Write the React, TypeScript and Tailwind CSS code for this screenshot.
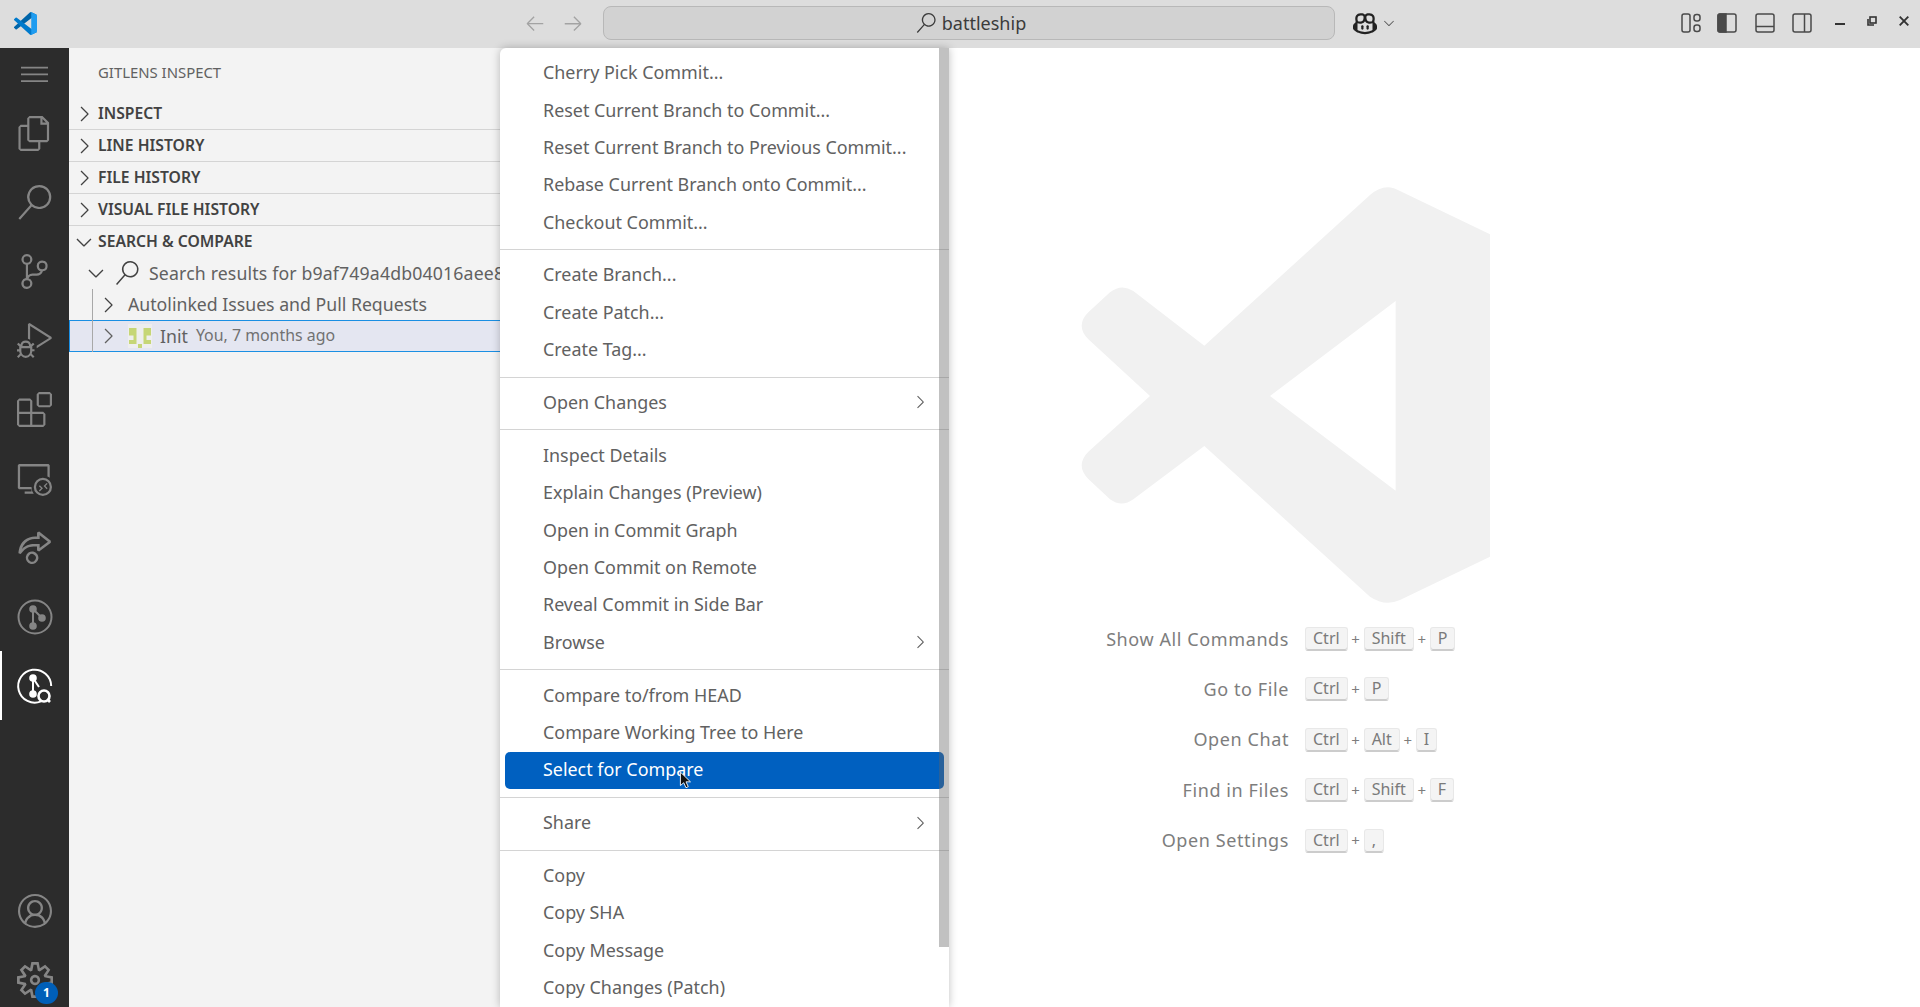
import {
  VscAccount,
  VscArrowLeft,
  VscArrowRight,
  VscChevronDown,
  VscChevronRight,
  VscCopilot,
  VscDebugAlt,
  VscExtensions,
  VscFiles,
  VscLiveShare,
  VscMenu,
  VscRemoteExplorer,
  VscSearch,
  VscSettingsGear,
  VscSourceControl,
} from 'react-icons/vsc';

const PullRequestsIcon = () => (
  <svg viewBox="0 0 40 40" className="w-10 h-10" fill="none" stroke="currentColor" strokeWidth="2">
    <circle cx="20" cy="20" r="16.5" />
    <path d="M18 12v17M18 12l9 9" />
    <circle cx="18" cy="12" r="2.8" fill="currentColor" />
    <circle cx="18" cy="29" r="2.8" fill="currentColor" />
    <circle cx="27" cy="21" r="2.8" fill="currentColor" />
  </svg>
);

const activityTop = [
  VscFiles,
  VscSearch,
  VscSourceControl,
  VscDebugAlt,
  VscExtensions,
  VscRemoteExplorer,
  VscLiveShare,
];

const sections = ['INSPECT', 'LINE HISTORY', 'FILE HISTORY', 'VISUAL FILE HISTORY'];

// null = separator
const menu: (null | { label: string; sub?: boolean; active?: boolean })[] = [
  { label: 'Cherry Pick Commit...' },
  { label: 'Reset Current Branch to Commit...' },
  { label: 'Reset Current Branch to Previous Commit...' },
  { label: 'Rebase Current Branch onto Commit...' },
  { label: 'Checkout Commit...' },
  null,
  { label: 'Create Branch...' },
  { label: 'Create Patch...' },
  { label: 'Create Tag...' },
  null,
  { label: 'Open Changes', sub: true },
  null,
  { label: 'Inspect Details' },
  { label: 'Explain Changes (Preview)' },
  { label: 'Open in Commit Graph' },
  { label: 'Open Commit on Remote' },
  { label: 'Reveal Commit in Side Bar' },
  { label: 'Browse', sub: true },
  null,
  { label: 'Compare to/from HEAD' },
  { label: 'Compare Working Tree to Here' },
  { label: 'Select for Compare', active: true },
  null,
  { label: 'Share', sub: true },
  null,
  { label: 'Copy' },
  { label: 'Copy SHA' },
  { label: 'Copy Message' },
  { label: 'Copy Changes (Patch)' },
];

const shortcuts = [
  { label: 'Show All Commands', keys: ['Ctrl', 'Shift', 'P'] },
  { label: 'Go to File', keys: ['Ctrl', 'P'] },
  { label: 'Open Chat', keys: ['Ctrl', 'Alt', 'I'] },
  { label: 'Find in Files', keys: ['Ctrl', 'Shift', 'F'] },
  { label: 'Open Settings', keys: ['Ctrl', ','] },
];

const VsCodeLogo = () => (
  <svg viewBox="0 0 100 100" className="w-[23px] h-[23px]">
    <path fill="#0065A9" d="M96.46 10.8 75.86.87a6.23 6.23 0 0 0-7.1 1.2L1.32 63.6a4.17 4.17 0 0 0 0 6.16l5.51 5.01a4.17 4.17 0 0 0 5.32.24L93.4 13.4c2.72-2.07 6.63-.13 6.63 3.29v-.24a6.25 6.25 0 0 0-3.54-5.63z" />
    <path fill="#007ACC" d="M96.46 89.2 75.86 99.13a6.23 6.23 0 0 1-7.1-1.2L1.32 36.4a4.17 4.17 0 0 1 0-6.16l5.51-5.01a4.17 4.17 0 0 1 5.32-.24L93.4 86.6c2.72 2.07 6.63.13 6.63-3.29v.24a6.25 6.25 0 0 1-3.54 5.63z" />
    <path fill="#1F9CF0" d="M75.86 99.13a6.23 6.23 0 0 1-7.11-1.2C71.06 100.23 75 98.6 75 95.33V4.67c0-3.27-3.94-4.9-6.25-2.59a6.23 6.23 0 0 1 7.11-1.2l20.6 9.91A6.25 6.25 0 0 1 100 16.42v67.17a6.25 6.25 0 0 1-3.54 5.63z" />
  </svg>
);

const Watermark = () => (
  <svg viewBox="60 40 1235 1260" className="w-[411.67px] h-[420px] shrink-0 ml-[2px]">
    <path
      fill="#f1f1f1"
      fillRule="evenodd"
      d="M1020 58 L1290 188 V1155 L1020 1285 Q975 1305 930 1275 L433 823 L220 983 Q185 1008 150 983 L85 922 Q45 880 85 840 L270 673 L85 503 Q45 462 85 422 L150 362 Q185 335 220 358 L433 522 L930 70 Q975 30 1020 58 Z M1007 388 L630 673 L1007 957 Z"
    />
  </svg>
);

const Identicon = () => (
  <svg viewBox="0 0 24 24" className="w-6 h-6 shrink-0">
    <rect width="24" height="24" fill="#eeeeee" />
    <path
      fill="#c6d676"
      d="M1 4h7.5v12H5.5v-4.5H1zM1 16h7.5v4H1zM23 4h-7.5v12h3v-4.5H23zM23 16h-7.5v4H23zM10 20h4v4h-4z"
    />
  </svg>
);

const InspectIcon = () => (
  <svg viewBox="0 0 40 40" className="w-10 h-10" fill="none" stroke="#fff" strokeWidth="2">
    <path d="M26 35.4A16.5 16.5 0 1 1 36.2 20" />
    <path d="M18 12v16M18 12l6 9" />
    <circle cx="18" cy="12" r="2.8" fill="#fff" />
    <circle cx="18" cy="28" r="2.8" fill="#fff" />
    <circle cx="29" cy="30" r="5.5" strokeWidth="2.6" fill="#2c2c2c" />
    <path d="M33 34l2 2" strokeWidth="2.6" />
  </svg>
);

const App = () => {
  return (
    <div className="relative flex flex-col h-screen w-full overflow-hidden bg-white font-['Noto_Sans',sans-serif]">
      {/* Title bar */}
      <div className="flex items-center h-12 shrink-0 bg-[#dddddd] pb-[2px]">
        <div className="ml-[14px] w-[23px] flex"><VsCodeLogo /></div>
        <div className="ml-[487px] flex items-center gap-[16px] text-[#a3a3a3]">
          <VscArrowLeft size={22} />
          <VscArrowRight size={22} />
        </div>
        <div className="ml-[19px] w-[732px] h-[34px] pl-[4px] rounded-lg border border-[#b8b8b8] bg-[#d2d2d2] flex items-center justify-center gap-1.5 text-[18px] text-[#3b3b3b]">
          <VscSearch size={20} />
          <span>battleship</span>
        </div>
        <div className="ml-[18px] flex items-center text-[#222222]">
          <VscCopilot size={24} />
          <VscChevronDown size={16} className="ml-[4px] text-[#555555]" />
        </div>
        <div className="ml-auto flex items-center text-[#4a4a4a]">
          <svg viewBox="0 0 20 20" className="w-5 h-5" fill="none" stroke="currentColor" strokeWidth="1.5">
            <rect x="1" y="1" width="8" height="18" rx="2" />
            <rect x="13" y="1.5" width="6" height="6.5" rx="2.5" />
            <rect x="13" y="12" width="6" height="6.5" rx="2.5" />
          </svg>
          <svg viewBox="0 0 20 20" className="ml-[16px] w-5 h-5" fill="none" stroke="currentColor" strokeWidth="1.5">
            <path d="M1 3a2 2 0 0 1 2-2h6v18H3a2 2 0 0 1-2-2z" fill="currentColor" />
            <rect x="1" y="1" width="18" height="18" rx="2" />
          </svg>
          <svg viewBox="0 0 20 20" className="ml-[18px] w-5 h-5" fill="none" stroke="currentColor" strokeWidth="1.5">
            <rect x="1" y="1" width="18" height="18" rx="2" />
            <path d="M1 13.5h18" />
          </svg>
          <svg viewBox="0 0 20 20" className="ml-[17px] w-5 h-5" fill="none" stroke="currentColor" strokeWidth="1.5">
            <rect x="1" y="1" width="18" height="18" rx="2" />
            <path d="M12.5 1v18" />
          </svg>
          <div className="ml-[23px] mr-[11px] mb-[4px] flex items-center gap-[22px] text-[#333333]">
            <div className="w-[10px] h-[2px] bg-[#333333] mt-[6px]" />
            <svg viewBox="0 0 10 10" className="w-[10px] h-[10px]" fill="none" stroke="currentColor" strokeWidth="1.6">
              <path d="M1 3v6h6" />
              <rect x="3" y="1" width="6" height="6" />
            </svg>
            <svg viewBox="0 0 10 10" className="w-[10px] h-[10px]" fill="none" stroke="currentColor" strokeWidth="1.9">
              <path d="M.7.7l8.6 8.6M9.3.7L.7 9.3" />
            </svg>
          </div>
        </div>
      </div>

      <div className="flex flex-1 min-h-0">
        {/* Activity bar */}
        <div className="w-[69px] shrink-0 bg-[#2c2c2c] flex flex-col items-center text-[#858585]">
          <div className="h-[51px] flex items-center"><VscMenu size={27} /></div>
          {activityTop.map((Icon, i) => (
            <div key={i} className="h-[69px] w-full flex items-center justify-center">
              <Icon size={35} />
            </div>
          ))}
          <div className="h-[69px] w-full flex items-center justify-center"><PullRequestsIcon /></div>
          <div className="h-[69px] w-full flex items-center justify-center border-l-2 border-white pr-[2px]">
            <InspectIcon />
          </div>
          <div className="mt-auto w-full flex flex-col items-center">
            <div className="h-[69px] mb-[7.5px] w-full flex items-center justify-center"><VscAccount size={34} /></div>
            <div className="relative h-[54px] w-full flex items-center justify-center">
              <VscSettingsGear size={36} />
              <span className="absolute left-[35px] top-[29px] w-[23px] h-[22px] rounded-full bg-[#005fb8] text-white text-[12px] font-bold leading-[22px] text-center">1</span>
            </div>
          </div>
        </div>

        {/* Side bar */}
        <div className="w-[581px] shrink-0 bg-[#f3f3f3] flex flex-col">
          <div className="h-[50px] pb-[2px] flex items-center pl-[29px] text-[14.9px] text-[#616161]">GITLENS INSPECT</div>
          {sections.map((name) => (
            <div key={name} className="h-[32px] flex items-center border-b border-[#d4d4d4] text-[#424242] font-semibold text-[15.7px] pl-[3px]">
              <VscChevronRight size={24} />
              <span className="ml-[2px]">{name}</span>
            </div>
          ))}
          <div className="h-[31px] flex items-center text-[#424242] font-semibold text-[15.7px] pl-[3px]">
            <VscChevronDown size={24} />
            <span className="ml-[2px]">SEARCH &amp; COMPARE</span>
          </div>
          <div className="relative text-[17.7px] text-[#616161]">
            <div className="h-[32px] flex items-center pl-[15px]">
              <VscChevronDown size={24} className="text-[#424242]" />
              <VscSearch size={24} className="ml-[7px] text-[#424242]" />
              <span className="ml-[10px] whitespace-nowrap tracking-[0.15px]">Search results for b9af749a4db04016aee8</span>
            </div>
            <div className="h-[31px] flex items-center pl-[27px]">
              <VscChevronRight size={24} className="text-[#424242]" />
              <span className="ml-[8px] whitespace-nowrap">Autolinked Issues and Pull Requests</span>
            </div>
            <div className="h-[32px] flex items-center pl-[26px] bg-[#e4e6f1] border-y border-[#1a8fe3] border-x">
              <VscChevronRight size={24} />
              <div className="ml-[8px]"><Identicon /></div>
              <span className="ml-[8px]">Init</span>
              <span className="ml-[8px] text-[15.9px] text-[#717171]">You, 7 months ago</span>
            </div>
            <div className="absolute left-[23px] top-[32px] bottom-0 w-px bg-[#a8a8a8]" />
          </div>
        </div>

        {/* Editor watermark */}
        <div className="flex-1 flex flex-col items-center pt-[137px]">
          <Watermark />
          <div className="self-start ml-[449px] mt-[22px] flex flex-col gap-[26.4px]">
            {shortcuts.map((s) => (
              <div key={s.label} className="flex items-center h-[24px]">
                <div className="w-[190px] text-right text-[18px] tracking-[0.6px] text-[#7d7d7d] whitespace-nowrap">{s.label}</div>
                <div className="ml-[16px] flex items-center">
                  {s.keys.map((k, i) => (
                    <div key={k} className="flex items-center">
                      {i > 0 && <span className="w-[16px] text-center text-[15px] text-[#7d7d7d]">+</span>}
                      <span className="h-[24px] min-w-[19px] px-[7px] text-center rounded-[3px] bg-[#f4f4f4] border border-[#e8e8e8] border-b-[#cccccc] shadow-[inset_0_-1px_0_#cccccc] text-[16px] leading-[20px] text-[#7a7a7a]">{k}</span>
                    </div>
                  ))}
                </div>
              </div>
            ))}
          </div>
        </div>
      </div>

      {/* Context menu */}
      <div className="absolute left-[500px] top-12 bottom-0 w-[449px] bg-white rounded-tl-[6px] shadow-[0_0_8px_rgba(0,0,0,0.25)] pt-[7px] overflow-hidden text-[17.9px] text-[#616161]">
        {menu.map((item, i) =>
          item === null ? (
            <div key={i} className="h-[15.6px] flex items-center"><div className="h-px w-full bg-[#d4d4d4]" /></div>
          ) : (
            <div key={i} className={`h-[37.33px] mx-[5px] flex items-center pl-[38px] pr-[20px] pb-[2px] rounded-[5px] ${item.active ? 'bg-[#0060c0] text-white' : ''}`}>
              <span className="whitespace-nowrap">{item.label}</span>
              {item.sub && <VscChevronRight size={20} className="ml-auto mr-[-6px]" />}
            </div>
          ),
        )}
        <div className="absolute left-[439px] top-0 w-[10px] h-[899px] bg-[#64646466]" />
      </div>

      {/* Pointer */}
      <svg viewBox="0 0 12 17" className="absolute left-[679px] top-[771px] w-[14px] h-[19px]">
        <path d="M1 1v12l3-2.5 2 4.5 2-1-2-4.3h4z" fill="#111" stroke="#fff" strokeWidth="0.8" />
      </svg>
    </div>
  );
};

export default App;
